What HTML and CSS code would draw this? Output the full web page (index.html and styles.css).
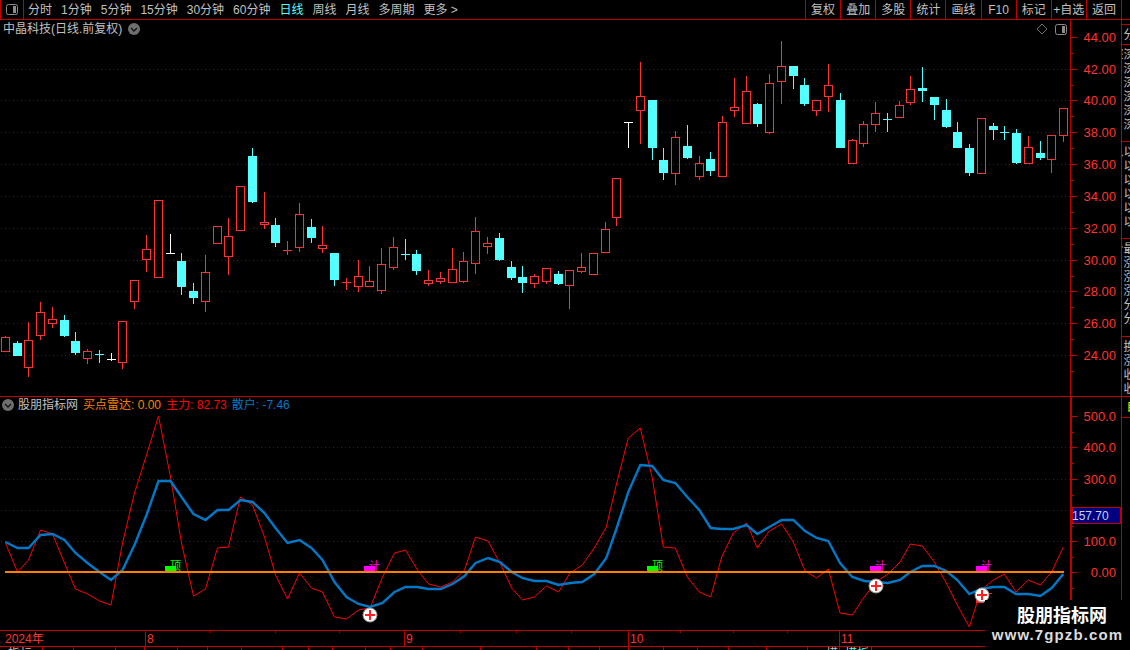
FILE: index.html
```html
<!DOCTYPE html>
<html lang="zh-CN">
<head>
<meta charset="utf-8">
<title>股朋指标网</title>
<link rel="stylesheet" href="styles.css">
</head>
<body>
<div class="app">
  <header class="toolbar">
    <div class="home-btn">
      <svg class="panel-icon" viewBox="0 0 12 11"><rect x="0.5" y="0.5" width="11" height="10" rx="2"/><rect class="panel-fill" x="7" y="2" width="3" height="7"/></svg>
    </div>
    <nav class="periods">
      <span>分时</span><span>1分钟</span><span>5分钟</span><span>15分钟</span><span>30分钟</span><span>60分钟</span><span class="active">日线</span><span>周线</span><span>月线</span><span>多周期</span><span>更多 &gt;</span>
    </nav>
    <nav class="tools">
      <span>复权</span><span>叠加</span><span>多股</span><span>统计</span><span>画线</span><span>F10</span><span>标记</span><span>+自选</span><span>返回</span>
    </nav>
  </header>
  <main class="workspace">
    <section class="charts">
      <div class="pane">
        <svg id="price" class="price-svg" viewBox="0 20 1121 376">
          <g class="axis-labels">
            <text x="1116" y="42">44.00</text><text x="1116" y="74">42.00</text><text x="1116" y="105">40.00</text><text x="1116" y="137">38.00</text><text x="1116" y="169">36.00</text><text x="1116" y="201">34.00</text><text x="1116" y="233">32.00</text><text x="1116" y="265">30.00</text><text x="1116" y="296">28.00</text><text x="1116" y="328">26.00</text><text x="1116" y="360">24.00</text>
          </g>
        </svg>
        <div class="pane-title">
          <span class="stock-name">中晶科技(日线.前复权)</span>
          <svg class="chev" viewBox="0 0 12 12"><circle cx="6" cy="6" r="6"/><path d="M3 5l3 3 3-3"/></svg>
        </div>
        <div class="chart-tools">
          <svg class="diamond" viewBox="0 0 12 12"><path d="M6 1l5 5-5 5-5-5z"/></svg>
          <svg class="panel-icon" viewBox="0 0 12 11"><rect x="0.5" y="0.5" width="11" height="10" rx="2"/><rect class="panel-fill" x="7" y="2" width="3" height="7"/></svg>
        </div>
      </div>
      <div class="pane indicator">
        <svg id="osc" class="osc-svg" viewBox="0 397 1121 233">
          <g class="axis-labels">
            <text x="1116" y="421">500.0</text><text x="1116" y="452">400.0</text><text x="1116" y="484">300.0</text><text x="1116" y="546">100.0</text><text x="1116" y="577">0.00</text>
          </g>
        </svg>
        <div class="pane-title">
          <svg class="chev" viewBox="0 0 12 12"><circle cx="6" cy="6" r="6"/><path d="M3 5l3 3 3-3"/></svg>
          <span class="ind-name">股朋指标网</span>
          <span class="ind-radar">买点雷达: 0.00</span>
          <span class="ind-main">主力: 82.73</span>
          <span class="ind-retail">散户: -7.46</span>
        </div>
      </div>
      <svg id="time" class="time-svg" viewBox="0 630 1121 20">
        <text class="time-label" x="5" y="643">2024年</text>
        <text class="time-label" x="147" y="643">8</text>
        <text class="time-label" x="406" y="643">9</text>
        <text class="time-label" x="630" y="643">10</text>
        <text class="time-label" x="841" y="643">11</text>
        <text class="clip-label" x="8" y="658">指标</text>
        <text class="clip-label" x="826" y="658">模</text>
        <text class="clip-label cyan" x="845" y="658">模板</text>
      </svg>
    </section>
    <aside class="rail">
      <div class="rail-cell"></div>
      <div class="rail-cell"><span>分</span></div>
      <div class="rail-cell"><span>深深深深深深深</span></div>
      <div class="rail-cell"><span>以以以以以以以</span></div>
      <div class="rail-cell"><span>最涨涨涨分分分</span></div>
      <div class="rail-cell"><span>换涨收收</span></div>
      <div class="rail-cell yellow"><span>自</span></div>
      <div class="rail-cell last"></div>
    </aside>
  </main>
  <div class="watermark">
    <div class="wm-name">股朋指标网</div>
    <div class="wm-url">www.7gpzb.com</div>
  </div>
</div>
<script src="script.js"></script>
</body>
</html>
```
FILE: styles.css
```css
* { box-sizing: border-box; }
html, body { margin: 0; background: #000; }
body { overflow: hidden; }

.app {
  position: relative;
  width: 1130px;
  height: 650px;
  overflow: hidden;
  display: flex;
  flex-direction: column;
  background: #000;
  color: #c0c0c0;
  font: 12px/1 "Liberation Sans", "Noto Sans CJK SC", sans-serif;
}

/* toolbar */
.toolbar {
  flex: none;
  height: 20px;
  display: flex;
  border-bottom: 1px solid #c00000;
}
.home-btn {
  flex: none;
  width: 24px;
  display: flex;
  align-items: center;
  justify-content: center;
  border-left: 1px solid #c00000;
  border-right: 1px solid #c00000;
}
.periods {
  flex: none;
  display: flex;
  align-items: center;
  gap: 9px;
  padding-left: 4px;
}
.periods .active { color: #54ffff; }
.tools {
  margin-left: auto;
  margin-right: 8px;
  width: 317px;
  display: grid;
  grid-template-columns: repeat(9, 1fr);
  border-right: 1px solid #c00000;
}
.tools span {
  display: flex;
  align-items: center;
  justify-content: center;
  white-space: nowrap;
  border-left: 1px solid #c00000;
}

/* icons */
.panel-icon { width: 12px; height: 11px; display: block; }
.panel-icon rect { fill: none; stroke: #8c8c8c; }
.panel-icon .panel-fill { fill: #8c8c8c; stroke: none; }
.diamond { width: 12px; height: 12px; display: block; }
.diamond path { fill: none; stroke: #707070; }
.chev { width: 12px; height: 12px; flex: none; }
.chev circle { fill: #6e6e6e; }
.chev path { fill: none; stroke: #111; stroke-width: 1.3; }

/* main */
.workspace { flex: 1; display: flex; min-height: 0; }
.charts { flex: none; width: 1121px; display: flex; flex-direction: column; }
.pane { position: relative; flex: none; }
.pane svg { display: block; }
.price-svg { width: 1121px; height: 376px; }
.indicator { border-top: 1px solid #c00000; }
.osc-svg { width: 1121px; height: 233px; }
.time-svg { display: block; width: 1121px; height: 20px; flex: none; }

.pane-title {
  position: absolute;
  left: 2px;
  top: 3px;
  display: flex;
  align-items: center;
  white-space: nowrap;
}
.stock-name { margin-left: 1px; margin-right: 6px; }
.indicator .pane-title { top: 2px; }
.ind-name { margin-left: 4px; margin-right: 5px; }
.ind-radar { color: #ff8000; margin-right: 5px; }
.ind-main { color: #ff0000; margin-right: 5px; }
.ind-retail { color: #0078c8; }

.chart-tools {
  position: absolute;
  top: 3px;
  left: 1036px;
  display: flex;
  align-items: center;
  gap: 7px;
}

/* svg contents */
.axis-labels text {
  fill: #ff3232;
  font: 13px "Liberation Sans", sans-serif;
  text-anchor: end;
}
.time-label { fill: #ff3232; font: 12px "Liberation Sans", "Noto Sans CJK SC", sans-serif; }
.clip-label { fill: #c0c0c0; font: 12px "Liberation Sans", "Noto Sans CJK SC", sans-serif; }
.clip-label.cyan { fill: #54ffff; }
.grid { stroke: #900000; stroke-width: 1; stroke-dasharray: 1 3; fill: none; }
.frame { stroke: #c00000; stroke-width: 1; fill: none; shape-rendering: crispEdges; }
.frame-wide { stroke: #c00000; stroke-width: 2; fill: none; shape-rendering: crispEdges; }
.c-red { stroke: #ff3232; fill: none; shape-rendering: crispEdges; }
.c-cyan { fill: #54ffff; shape-rendering: crispEdges; }
.c-white { fill: #ffffff; shape-rendering: crispEdges; }
.c-redfill { fill: #ff3232; shape-rendering: crispEdges; }
.line-main { stroke: #ff0000; stroke-width: 1; fill: none; }
.line-retail { stroke: #0078c8; stroke-width: 2.4; fill: none; }
.line-zero { stroke: #ff8000; stroke-width: 2; shape-rendering: crispEdges; }
.sig-green { fill: #00ff00; }
.sig-pink { fill: #ff00ff; }
.sig-text { font: 11px "Noto Sans CJK SC", sans-serif; }
.dot { fill: #fff; stroke: #999; stroke-width: 1; }
.dot-plus { stroke: #ff2020; stroke-width: 2; shape-rendering: crispEdges; }
.flag { fill: #ff2020; shape-rendering: crispEdges; }
.price-tag { fill: #000080; stroke: #c00000; shape-rendering: crispEdges; }
.price-tag-text { fill: #c8d4f0; font: 12px "Liberation Sans", sans-serif; }

/* right rail */
.rail {
  flex: none;
  width: 9px;
  display: grid;
  grid-template-rows: 5px 20px 97px 97px 98px 60px 21px 1fr;
  border-left: 1px solid #c00000;
  overflow: hidden;
}
.rail-cell {
  overflow: hidden;
  border-bottom: 1px solid #c00000;
  padding-left: 1px;
  padding-top: 3px;
  color: #c0c0c0;
}
.rail-cell span {
  display: block;
  width: 12px;
  writing-mode: vertical-rl;
  letter-spacing: 2px;
  font-family: "Noto Sans CJK SC", sans-serif;
}
.rail-cell.yellow { color: #ffff00; padding-left: 4px; }
.rail-cell.last { border-bottom: 0; }

/* watermark */
.watermark {
  position: absolute;
  left: 985px;
  top: 600px;
  width: 145px;
  height: 50px;
  background: #000;
  text-align: center;
}
.wm-name {
  margin-top: 4px;
  padding-left: 9px;
  color: #fff;
  font: 700 18px/20px "Noto Sans CJK SC", sans-serif;
}
.wm-url {
  margin-top: 2px;
  color: #dcdcdc;
  font: 700 15px/17px "Liberation Sans", sans-serif;
  letter-spacing: 1.1px;
}
```
FILE: script.js
```js
var NS = "http://www.w3.org/2000/svg";
function el(parent, name, attrs) {
  var e = document.createElementNS(NS, name);
  for (var k in attrs) e.setAttribute(k, attrs[k]);
  parent.appendChild(e);
  return e;
}
function bar(p, cls, x, y, w, h) { el(p, "rect", { "class": cls, x: x, y: y, width: w, height: h }); }

/* x, wickTop, bodyTop, bodyBottom, wickBottom, kind */
var candles = [
[5,336,337,352,352,"r"],[17,341,343,356,356,"c"],[28,322,340,368,377,"r"],[40,302,312,336,340,"r"],[52,307,319,324,328,"r"],
[64,315,320,336,337,"c"],[75,332,341,353,355,"c"],[87,349,351,359,364,"r"],[99,350,354,354,363,"x"],[111,353,359,359,361,"w"],
[122,321,321,363,369,"r"],[134,280,280,302,309,"r"],[146,235,249,260,272,"r"],[158,200,200,278,278,"r"],[170,234,253,253,254,"w"],
[181,253,261,287,295,"c"],[193,283,291,298,304,"c"],[205,255,272,302,312,"r"],[217,226,226,244,244,"r"],[228,218,236,257,275,"r"],
[240,186,186,231,231,"r"],[252,148,156,202,203,"c"],[264,192,222,225,229,"r"],[275,218,225,243,247,"c"],[287,241,250,250,255,"y"],
[299,203,214,248,252,"r"],[311,219,227,238,243,"c"],[322,226,245,249,253,"r"],[334,253,253,280,286,"c"],[346,278,282,282,290,"y"],
[358,260,276,287,292,"r"],[369,266,281,287,287,"r"],[381,248,264,291,294,"r"],[393,237,247,268,270,"r"],[405,239,254,254,260,"x"],
[416,250,254,271,275,"c"],[428,270,280,284,286,"r"],[440,272,278,282,284,"r"],[452,248,269,283,283,"r"],[463,252,261,282,283,"r"],
[475,217,231,264,274,"r"],[487,237,243,247,254,"r"],[499,233,238,260,261,"c"],[511,261,267,278,280,"c"],[522,266,277,283,293,"c"],
[534,274,276,284,288,"r"],[546,268,268,282,284,"r"],[558,271,274,284,285,"c"],[569,270,270,286,309,"r"],[581,253,267,272,273,"r"],
[593,253,253,275,275,"r"],[605,222,229,253,253,"r"],[616,178,178,218,226,"r"],[628,122,122,122,148,"w"],[640,62,96,111,144,"r"],
[652,100,100,148,160,"c"],[663,148,160,173,180,"c"],[675,131,137,174,185,"r"],[687,125,146,158,159,"c"],[699,156,163,177,180,"r"],
[710,152,159,171,176,"c"],[722,116,122,177,177,"r"],[734,78,107,111,117,"r"],[746,76,91,124,124,"r"],[757,103,104,124,127,"c"],
[769,74,83,133,134,"r"],[781,41,66,82,104,"r"],[793,66,66,76,89,"c"],[804,78,85,104,106,"c"],[816,100,100,111,116,"r"],
[828,64,85,97,112,"r"],[840,93,100,148,148,"c"],[852,139,140,164,164,"r"],[863,121,124,144,147,"r"],[875,102,113,125,132,"r"],
[887,113,119,119,132,"x"],[899,101,105,118,118,"r"],[910,76,89,103,105,"r"],[922,67,88,91,102,"c"],[934,97,97,105,120,"c"],
[946,99,110,127,128,"c"],[957,122,132,148,148,"c"],[969,144,148,173,176,"c"],[981,118,118,174,174,"r"],[993,123,126,130,140,"c"],
[1004,126,132,132,140,"x"],[1016,129,133,163,164,"c"],[1028,136,147,164,164,"r"],[1040,141,153,158,160,"c"],[1051,135,135,160,173,"r"],
[1063,108,108,136,142,"r"]
];

var red = [[5.5,543],[17.5,572],[28.5,560],[40.5,530],[52.5,534],[64.5,563],[75.5,589],[87.5,594],[99.5,601],[111,605],[122.5,543],[134.5,493],[146.5,455],[158.5,416],[170.5,477],[181.5,543],[193.5,596],[205.5,589],[217.5,548],[228.5,547],[240.5,497],[252.5,505],[264.5,537],[275.5,575],[287.5,599],[299.5,573],[311.5,588],[322.5,592],[334.5,617],[346.5,619],[358.5,610],[370,608],[382.5,577],[394.5,553],[405.5,550],[417.5,570],[428.5,584],[440.5,587],[452.5,582],[464.5,570],[475.5,537],[488,541],[500,563],[511.7,588],[522.3,600],[534.3,597],[546.3,586],[558.7,592],[570,573],[582.3,565],[594.3,548],[606.3,527],[616.7,483],[628.3,438],[640.3,428],[652.3,478],[663.3,547],[675.3,548],[687.3,577],[699.3,592],[710.7,597],[721.7,557],[733.3,533],[746.7,523],[757.3,548],[769.3,531],[781.7,524],[793.3,542],[805,571],[816.7,578],[828.3,569],[840,613],[852.3,615],[864.3,597],[875.7,582],[888,574],[900,562],[910.3,544],[922.3,546],[934.3,562],[946.3,583],[957.3,605],[969.3,627],[981,590],[993.3,580],[1004.3,574],[1016,592],[1028.3,580],[1040.3,585],[1051.7,572],[1063.3,547]];

var blue = [[5.5,542],[17.5,548],[28.5,548],[40.5,535],[52.5,534],[64.5,540],[75.5,553],[87.5,563],[99.5,572],[111,580],[122.5,570],[134.5,545],[146.5,515],[158.5,481],[170.5,481],[181.5,497],[193.5,514],[205.5,520],[217.5,510],[228.5,510],[240.5,500],[252.5,502],[264.5,513],[275.5,528],[287.5,543],[299.5,540],[311.5,548],[322.5,560],[334.5,582],[346.5,597],[358.5,604],[370,607],[382.5,603],[394.5,592],[405.5,587],[417.5,587],[428.5,589],[440.5,589],[452.5,584],[464.5,576],[475.5,563],[488,558],[500,562],[511.7,572],[522.3,578],[534.3,581],[546.3,581],[558.7,585],[570,583],[582.3,582],[594.3,574],[606.3,558],[616.7,528],[628.3,492],[640.3,465],[652.3,466],[663.3,480],[675.3,483],[687.3,497],[699.3,510],[710.7,528],[721.7,529],[733.3,529],[746.7,525],[757.3,534],[769.3,527],[781.7,520],[793.3,520],[805,531],[816.7,538],[828.3,541],[840,563],[852.3,577],[864.3,581],[875.7,582],[888,583],[900,580],[910.3,572],[922.3,566],[934.3,566],[946.3,571],[957.3,580],[969.3,594],[981,589],[993.3,587],[1004.3,587],[1016,594],[1028.3,594],[1040.3,596],[1051.7,588],[1063.3,574]];

function pts(a) { return a.map(function (p) { return p.join(","); }).join(" "); }

/* price pane */
var price = document.getElementById("price");
var first = price.firstElementChild;
function before(name, attrs) {
  var e = el(price, name, attrs);
  price.insertBefore(e, first);
  return e;
}
[69, 100, 132, 164, 196, 228, 260, 291, 323, 355].forEach(function (y) {
  before("line", { "class": "grid", x1: 1, x2: 1070, y1: y + 0.5, y2: y + 0.5 });
});
candles.forEach(function (c) {
  var x = c[0], wt = c[1], bt = c[2], bb = c[3], wb = c[4], k = c[5];
  var g = before("g", {});
  if (k === "r") {
    bar(g, "c-redfill", x, wt, 1, bt - wt);
    bar(g, "c-redfill", x, bb, 1, wb - bb);
    el(g, "rect", { "class": "c-red", x: x - 3.5, y: bt + 0.5, width: 8, height: bb - bt - 1 });
  } else if (k === "c") {
    bar(g, "c-cyan", x, wt, 1, wb - wt);
    bar(g, "c-cyan", x - 4, bt, 9, bb - bt);
  } else {
    var cls = k === "x" ? "c-cyan" : k === "y" ? "c-redfill" : "c-white";
    bar(g, cls, x, wt, 1, wb - wt);
    bar(g, cls, x - 4, bt, 9, 1);
  }
});
var d = "M1070.5 20V396";
[37, 69, 100, 132, 164, 196, 228, 260, 291, 323, 355].forEach(function (y) {
  d += "M1071 " + (y + 0.5) + "H1077";
  d += "M1071 " + (y + 16.5) + "H1074";
});
before("path", { "class": "frame", d: d });

/* indicator pane */
var osc = document.getElementById("osc");
var oscFirst = osc.firstElementChild;
function ob(name, attrs) {
  var e = el(osc, name, attrs);
  osc.insertBefore(e, oscFirst);
  return e;
}
[447, 479, 510, 541].forEach(function (y) {
  ob("line", { "class": "grid", x1: 1, x2: 1070, y1: y + 0.5, y2: y + 0.5 });
});
ob("polyline", { "class": "line-main", points: pts(red) });
ob("polyline", { "class": "line-retail", points: pts(blue) });
ob("line", { "class": "line-zero", x1: 5, x2: 1064, y1: 572, y2: 572 });

function signal(x, kind, text) {
  ob("rect", { "class": kind === "g" ? "sig-green" : "sig-pink", x: x, y: 566, width: 11, height: 5 });
  var t = ob("text", { "class": "sig-text " + (kind === "g" ? "sig-green" : "sig-pink"), x: x + 5, y: 570 });
  t.textContent = text;
}
signal(165, "g", "顶");
signal(364, "p", "计");
signal(647, "g", "顶");
signal(870, "p", "计");
signal(976, "p", "计");

ob("rect", { "class": "flag", x: 976, y: 600, width: 8, height: 3 });
ob("rect", { "class": "flag", x: 988, y: 593, width: 4, height: 1 });
[[370, 615], [876, 586], [982, 595]].forEach(function (p) {
  ob("circle", { "class": "dot", cx: p[0], cy: p[1], r: 7 });
  ob("path", { "class": "dot-plus", d: "M" + (p[0] - 5) + " " + p[1] + "h10M" + p[0] + " " + (p[1] - 5) + "v10" });
});

var od = "";
[416, 447, 479, 510, 541, 572].forEach(function (y) {
  od += "M1072 " + (y + 0.5) + "H1077";
  od += "M1072 " + (y + 16.5) + "H1074";
});
ob("path", { "class": "frame-wide", d: "M1071 397V600" });
ob("path", { "class": "frame", d: od });

ob("rect", { "class": "price-tag", x: 1072.5, y: 507.5, width: 48, height: 16 });
var tag = ob("text", { "class": "price-tag-text", x: 1072, y: 520 });
tag.textContent = "157.70";

/* time axis */
var time = document.getElementById("time");
var td = "M0 630.5H1121M0 646.5H1121";
[145, 404, 628, 839].forEach(function (x) { td += "M" + (x + 0.5) + " 630V646"; });
[210, 275, 339, 460, 516, 571, 680, 733, 787].forEach(function (x) { td += "M" + (x + 0.5) + " 630V633"; });
[42, 73, 115, 144, 177, 207, 241, 282, 308, 332, 365, 390, 422, 480, 536, 568, 599, 628, 663, 697, 728, 766, 807, 839, 871].forEach(function (x) {
  td += "M" + (x + 0.5) + " 646V650";
});
el(time, "path", { "class": "frame", d: td });
```
